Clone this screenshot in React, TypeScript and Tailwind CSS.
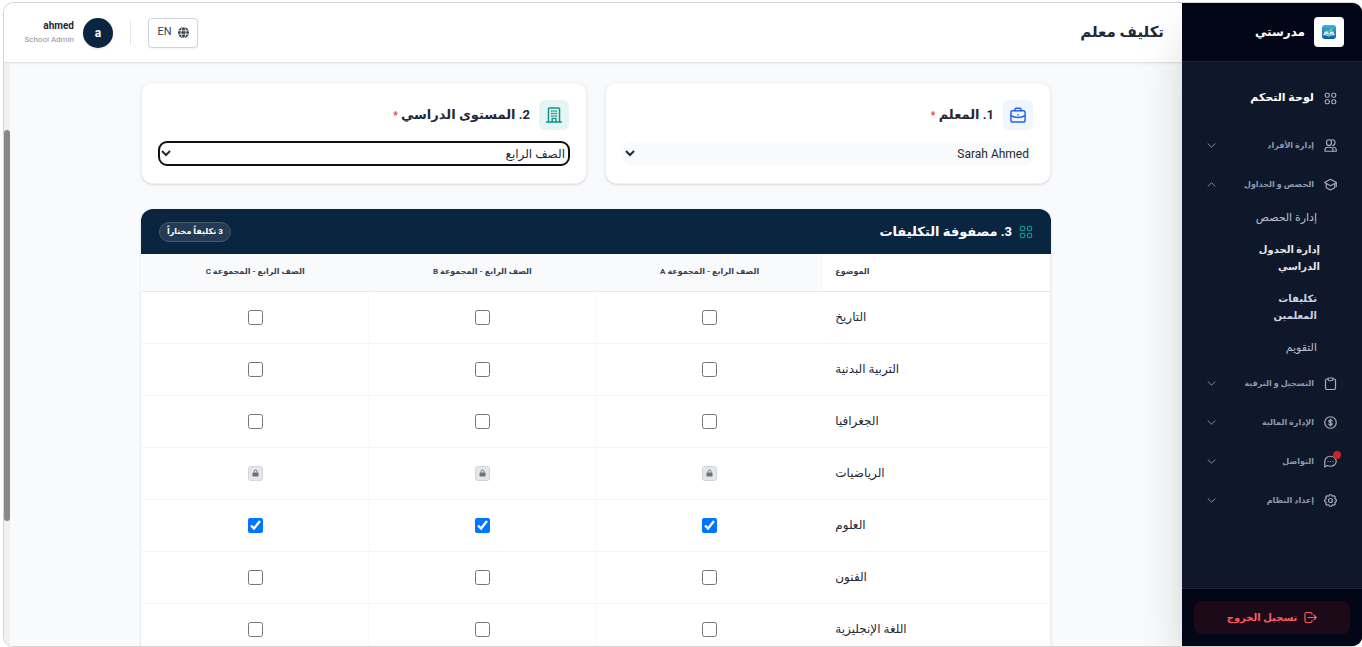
import type { ReactNode } from "react";
import { useState } from "react";

type IconProps = { className?: string; children?: ReactNode };

function Icon({ className = "", children }: IconProps) {
  return (
    <svg
      viewBox="0 0 26 26"
      fill="none"
      stroke="currentColor"
      strokeWidth="2.4"
      strokeLinecap="round"
      strokeLinejoin="round"
      aria-hidden="true"
      className={`shrink-0 ${className}`}
    >
      {children}
    </svg>
  );
}

const GridIcon = ({ className }: IconProps) => (
  <Icon className={className}>
    <rect x="2.5" y="2.5" width="8" height="8" rx="3" />
    <rect x="15.5" y="2.5" width="8" height="8" rx="3" />
    <rect x="2.5" y="15.5" width="8" height="8" rx="3" />
    <rect x="15.5" y="15.5" width="8" height="8" rx="3" />
  </Icon>
);

const UsersIcon = ({ className }: IconProps) => (
  <Icon className={className}>
    <path d="M5 7c0-4 2-5.500 5-5.500S15 3 15 7s-2 6-5 6-5-2-5-6z" />
    <path d="M13.500 2.500C18 0 22 2.500 22 7c0 4-2 6-5 6" />
    <path d="M2 24.500v-2c0-4 2-6 5.500-6h4c3.500 0 6.500 2 6.500 6v2z" />
    <path d="M18 16.500c4 0 6.500 2 6.500 6v2H18" />
  </Icon>
);

const SchoolIcon = ({ className }: IconProps) => (
  <Icon className={className}>
    <path d="M13 2.500 25 9 13 15.500 1 9z" />
    <path d="M4.500 12v7.500L13 24l8.500-4.500V12" />
    <path d="M24.500 10v7" />
  </Icon>
);

const ClipboardIcon = ({ className }: IconProps) => (
  <Icon className={className}>
    <path d="M8 4H6a3 3 0 0 0-3 3v15a3 3 0 0 0 3 3h14a3 3 0 0 0 3-3V7a3 3 0 0 0-3-3h-2" />
    <path d="M8 2h10v2.500a3 3 0 0 1-3 3h-4a3 3 0 0 1-3-3z" />
  </Icon>
);

const DollarIcon = ({ className }: IconProps) => (
  <Icon className={className}>
    <circle cx="13" cy="13" r="11.5" />
    <path d="M16.500 10c-.5-1.500-2-2-3.500-2-2 0-3.500.8-3.500 2.500 0 3.500 7 1.500 7 5 0 1.700-1.500 2.500-3.500 2.500-1.700 0-3-.7-3.500-2M13 6v14" />
  </Icon>
);

const ChatIcon = ({ className }: IconProps) => (
  <Icon className={className}>
    <path d="M1.500 24V13C1.500 7 6.500 2.500 13 2.500S24.500 7 24.500 12.500 19.500 22.500 13 22.500c-3 0-5-.5-7-1.500z" />
    <path d="M8 13h.1M13 13h.1M18 13h.1" />
  </Icon>
);

const GearIcon = ({ className }: IconProps) => (
  <Icon className={className}>
    <path d="M11 1.500h4l1.500 3 3.500-1 2.500 2.500-1 3.500 3 1.500v4l-3 1.500 1 3.500-2.500 2.500-3.500-1-1.500 3h-4l-1.500-3-3.500 1L3.500 20l1-3.500-3-1.500v-4l3-1.500-1-3.500L6 3.500l3.500 1z" />
    <circle cx="13" cy="13" r="4" />
  </Icon>
);

const LogoutIcon = ({ className }: IconProps) => (
  <Icon className={className}>
    <path d="M16 7V6a3 3 0 0 0-3-3H5a3 3 0 0 0-3 3v14a3 3 0 0 0 3 3h8a3 3 0 0 0 3-3v-1" />
    <path d="M8 13h16M20 8.500l4.500 4.500-4.500 4.500" />
  </Icon>
);

const ChevronIcon = ({ className }: IconProps) => (
  <Icon className={className}>
    <path d="m3 8 10 10L23 8" strokeWidth="2.700" />
  </Icon>
);

const BriefcaseIcon = ({ className }: IconProps) => (
  <Icon className={className}>
    <path d="M8 6V4a2 2 0 0 1 2-2h6a2 2 0 0 1 2 2v2" />
    <rect x="1.500" y="6" width="23" height="18.500" rx="3" />
    <path d="M2 14c3 2.500 7 3 11 3s8-.5 11-3" />
    <path d="M13 12.500v.5" />
  </Icon>
);

const BuildingIcon = ({ className }: IconProps) => (
  <Icon className={className}>
    <path d="M4 24V3a1.500 1.500 0 0 1 1.500-1.500h15A1.500 1.500 0 0 1 22 3v21M1 24.500h24" />
    <path d="M10 24v-5.500h6V24" />
    <path d="M9 6.500h1M16 6.500h1M9 10.500h1M16 10.500h1M9 14.500h1M16 14.500h1M12.700 6.500h.6M12.700 10.500h.6M12.700 14.500h.6" />
  </Icon>
);

const GlobeIcon = ({ className }: IconProps) => (
  <svg viewBox="0 0 22 22" aria-hidden="true" className={`shrink-0 ${className}`}>
    <circle cx="11" cy="11" r="11" fill="currentColor" />
    <g fill="none" stroke="#fff" strokeWidth="1.600">
      <ellipse cx="11" cy="11" rx="5" ry="11" />
      <path d="M0 7.500h22M0 14.500h22" />
    </g>
  </svg>
);

const LockIcon = ({ className }: IconProps) => (
  <svg viewBox="0 0 14 16" aria-hidden="true" className={`shrink-0 ${className}`}>
    <path d="M4 7V5a3 3 0 0 1 6 0v2" fill="none" stroke="currentColor" strokeWidth="2" />
    <rect x="1" y="7" width="12" height="8" rx="1.500" fill="currentColor" />
  </svg>
);

const Logo = () => (
  <svg viewBox="0 0 42 42" aria-hidden="true" className="size-[14px]">
    <defs>
      <linearGradient id="sky" x1="0" y1="0" x2="0" y2="1">
        <stop offset="0" stopColor="#35b6ea" />
        <stop offset="1" stopColor="#0d55b0" />
      </linearGradient>
    </defs>
    <rect width="42" height="42" rx="9" fill="url(#sky)" />
    <path d="M3 31 9 19c5 0 9 2 12 6 3-4 7-6 12-6l6 12c-7-1-13 0-18 4-5-4-11-5-18-4z" fill="#d9f3f7" />
    <path d="M21 34V18M9 27c4 0 8 1 12 5 4-4 8-5 12-5" fill="none" stroke="#2c8fc5" strokeWidth="2" />
    <path d="M21 23c-6 0-9-3-9-8 6 0 9 3 9 8zM21 20c0-6 4-10 11-11 0 7-4 11-11 11z" fill="#8fd14a" />
  </svg>
);

type NavGroupProps = {
  label: string;
  icon: ReactNode;
  open?: boolean;
  dot?: boolean;
  children?: ReactNode;
};

function NavGroup({ label, icon, open = false, dot = false, children }: NavGroupProps) {
  return (
    <li>
      <button
        type="button"
        aria-expanded={open}
        className="flex h-[39px] w-full items-center gap-[10px] text-[8px] font-bold text-[#8a9ab1]"
      >
        <span className="relative text-[#a3acba]">
          {icon}
          {dot && <span className="absolute -top-1 -right-1 size-2 rounded-full bg-[#c9252d]" />}
        </span>
        <span>{label}</span>
        <ChevronIcon className={open ? "ms-auto size-[9px] rotate-180" : "ms-auto size-[9px]"} />
      </button>
      {children}
    </li>
  );
}

function Sidebar() {
  return (
    <aside className="z-10 flex w-[180px] shrink-0 flex-col bg-[#0f172a] shadow-2xl">
      <div className="flex h-[59px] shrink-0 items-center gap-[9px] border-b border-[#1c2536] bg-[#020617] px-[18px]">
        <span className="flex size-[30px] items-center justify-center rounded bg-white">
          <Logo />
        </span>
        <span className="text-[12px] font-bold text-white">مدرستي</span>
      </div>
      <nav className="flex-1 overflow-hidden px-[25px] pt-4">
        <a href="#dashboard" className="mb-2 flex h-10 items-center gap-[10px] text-[11px] font-bold text-white">
          <GridIcon className="size-[13px] text-[#a3acba]" />
          لوحة التحكم
        </a>
        <ul>
          <NavGroup label="إدارة الأفراد" icon={<UsersIcon className="size-[13px]" />} />
          <NavGroup label="الحصص و الجداول" icon={<SchoolIcon className="size-[13px]" />} open>
            <ul className="flex flex-col items-start gap-[15px] ps-5 pt-[5px] pb-2 text-[11px] leading-[17px] text-[#b6c0cf]">
              <li><a href="#classes">إدارة الحصص</a></li>
              <li className="-ms-[3px] w-[72px] text-[10px] font-bold text-[#e5e5e5]"><a href="#timetable">إدارة الجدول الدراسي</a></li>
              <li className="w-[72px] text-[10px] font-bold text-[#cbd5e1]"><a href="#assignments">تكليفات المعلمين</a></li>
              <li><a href="#calendar">التقويم</a></li>
            </ul>
          </NavGroup>
          <NavGroup label="التسجيل و الترقية" icon={<ClipboardIcon className="size-[13px]" />} />
          <NavGroup label="الإدارة المالية" icon={<DollarIcon className="size-[13px]" />} />
          <NavGroup label="التواصل" icon={<ChatIcon className="size-[13px]" />} dot />
          <NavGroup label="إعداد النظام" icon={<GearIcon className="size-[13px]" />} />
        </ul>
      </nav>
      <div className="border-t border-[#1c2536] bg-[#020617] p-3">
        <button
          type="button"
          className="flex h-[33px] w-full items-center justify-center gap-[7px] rounded-lg bg-[#1c0a19] text-[10px] font-bold text-[#f85c62]"
        >
          <LogoutIcon className="size-[13px]" />
          تسجيل الخروج
        </button>
      </div>
    </aside>
  );
}

function TopBar() {
  return (
    <header className="flex h-[60px] shrink-0 items-center justify-between border-b border-[#dfe1e4] bg-white px-[18px] shadow-xs">
      <h1 className="text-[15px] font-bold text-[#1f2937]">تكليف معلم</h1>
      <div className="flex items-center">
        <button
          type="button"
          className="flex h-[30px] w-[50px] items-center justify-center gap-[6px] rounded border border-[#d1d5db] bg-white text-[11px] text-[#374151] shadow-xs"
        >
          <GlobeIcon className="size-[11px]" />
          EN
        </button>
        <span className="mx-[17px] h-6 w-px bg-[#e5e7eb]" />
        <span className="me-[9px] flex size-[30px] items-center justify-center rounded-full bg-[#0a2540] text-[12px] font-bold text-white shadow-sm">
          a
        </span>
        <div dir="ltr" className="min-w-[52px]">
          <p className="text-right text-[10px] leading-[14px] font-bold text-[#1f2937]">ahmed</p>
          <p className="text-right text-[8px] leading-[13px] text-[#8b93a1]">School Admin</p>
        </div>
      </div>
    </header>
  );
}

type PickerProps = {
  id: string;
  title: string;
  icon: ReactNode;
  tone: string;
  value: string;
  selectClass: string;
};

function Picker({ id, title, icon, tone, value, selectClass }: PickerProps) {
  return (
    <section className="flex-1 rounded-xl border border-[#f1f2f4] bg-white px-[17px] pt-[17px] pb-[18px] shadow-sm">
      <div className="mb-3 flex items-center gap-[9px]">
        <span className={`flex size-[30px] items-center justify-center rounded-md ${tone}`}>{icon}</span>
        <label htmlFor={id} className="text-[13px] font-bold text-[#1f2937]">
          {title} <span className="text-[10px] text-[#fb2c36]">*</span>
        </label>
      </div>
      <select id={id} defaultValue={value} className={`block h-[23px] w-full rounded-lg text-[12px] text-[#1f2937] ${selectClass}`}>
        <option>{value}</option>
      </select>
    </section>
  );
}

const groups = ["A", "B", "C"];

const subjects = [
  { name: "التاريخ" },
  { name: "التربية البدنية" },
  { name: "الجغرافيا" },
  { name: "الرياضيات", locked: true },
  { name: "العلوم", assigned: true },
  { name: "الفنون" },
  { name: "اللغة الإنجليزية" },
];

function Matrix() {
  const [picked, setPicked] = useState<string[]>(
    subjects.filter((s) => s.assigned).flatMap((s) => groups.map((g) => `${s.name}-${g}`)),
  );
  const toggle = (key: string) =>
    setPicked((keys) => (keys.includes(key) ? keys.filter((k) => k !== key) : [...keys, key]));

  return (
    <section className="overflow-hidden rounded-t-xl shadow-sm">
      <div className="flex h-[45px] items-center justify-between bg-[#0a2540] px-[18px]">
        <h2 className="flex items-center gap-[7px] text-[13px] font-bold text-white">
          <GridIcon className="size-[14px] text-[#0d9488]" />
          3. مصفوفة التكليفات
        </h2>
        <span className="flex h-5 items-center rounded-full border border-[#485b70] bg-[#233b53] px-[7px] text-[8px] font-bold text-white">
          {picked.length} تكليفاً مختاراً
        </span>
      </div>
      <table className="w-full table-fixed border-r border-[#eef0f2] bg-white">
        <thead>
          <tr className="h-[37px] border-b border-[#e5e7eb] bg-[#f8fafc] text-[8px] font-bold text-[#374151]">
            <th scope="col" className="bg-white px-3 text-left">الموضوع</th>
            {groups.map((g) => (
              <th key={g} scope="col">الصف الرابع - المجموعة {g}</th>
            ))}
          </tr>
        </thead>
        <tbody>
          {subjects.map((s) => (
            <tr key={s.name} className="h-[52px] border-b border-[#f3f4f6]">
              <th scope="row" className="px-3 text-left text-[12px] font-normal text-[#1f2937]">{s.name}</th>
              {groups.map((g) => (
                <td key={g} className="border-e border-[#f9fafb] text-center">
                  {s.locked ? (
                    <span className="mx-auto flex size-[15px] items-center justify-center rounded-[3px] border border-[#d1d5db] bg-[#e5e7eb] text-[#6b7280]">
                      <LockIcon className="h-2 w-[7px]" />
                    </span>
                  ) : (
                    <input
                      type="checkbox"
                      aria-label={`${s.name} ${g}`}
                      checked={picked.includes(`${s.name}-${g}`)}
                      onChange={() => toggle(`${s.name}-${g}`)}
                      className="mx-auto block size-[15px]"
                    />
                  )}
                </td>
              ))}
            </tr>
          ))}
        </tbody>
      </table>
    </section>
  );
}

export default function App() {
  return (
    <div dir="rtl" className="h-screen bg-white pt-[2px] pl-[3px] font-['Roboto','DejaVu_Sans',sans-serif]">
      <div className="flex h-full overflow-hidden rounded-[10px] border border-r-0 border-[#d4d4d4]">
        <Sidebar />
        <div className="flex min-w-0 flex-1 flex-col bg-[#f8fafc]">
          <TopBar />
          <div className="flex min-h-0 flex-1">
            <main className="min-w-0 flex-1 overflow-hidden px-5 pt-[19px]">
              <div className="mx-auto flex max-w-[910px] flex-col gap-[25px]">
                <div className="flex gap-[18px]">
                  <Picker
                    id="teacher"
                    title="1. المعلم"
                    icon={<BriefcaseIcon className="size-4" />}
                    tone="bg-[#eff6ff] text-[#2563eb]"
                    value="Sarah Ahmed"
                    selectClass="bg-[#f9fafb]"
                  />
                  <Picker
                    id="level"
                    title="2. المستوى الدراسي"
                    icon={<BuildingIcon className="size-4" />}
                    tone="bg-[#e6f4f3] text-[#0d9488]"
                    value="الصف الرابع"
                    selectClass="bg-white outline-2 -outline-offset-1 outline-[#101010]"
                  />
                </div>
                <Matrix />
              </div>
            </main>
            <div className="flex w-[6px] shrink-0 flex-col bg-[#f1f1f1]" aria-hidden="true">
              <div className="h-[11.5%]" />
              <div className="h-[67%] rounded-full bg-[#888888]" />
            </div>
          </div>
        </div>
      </div>
    </div>
  );
}
